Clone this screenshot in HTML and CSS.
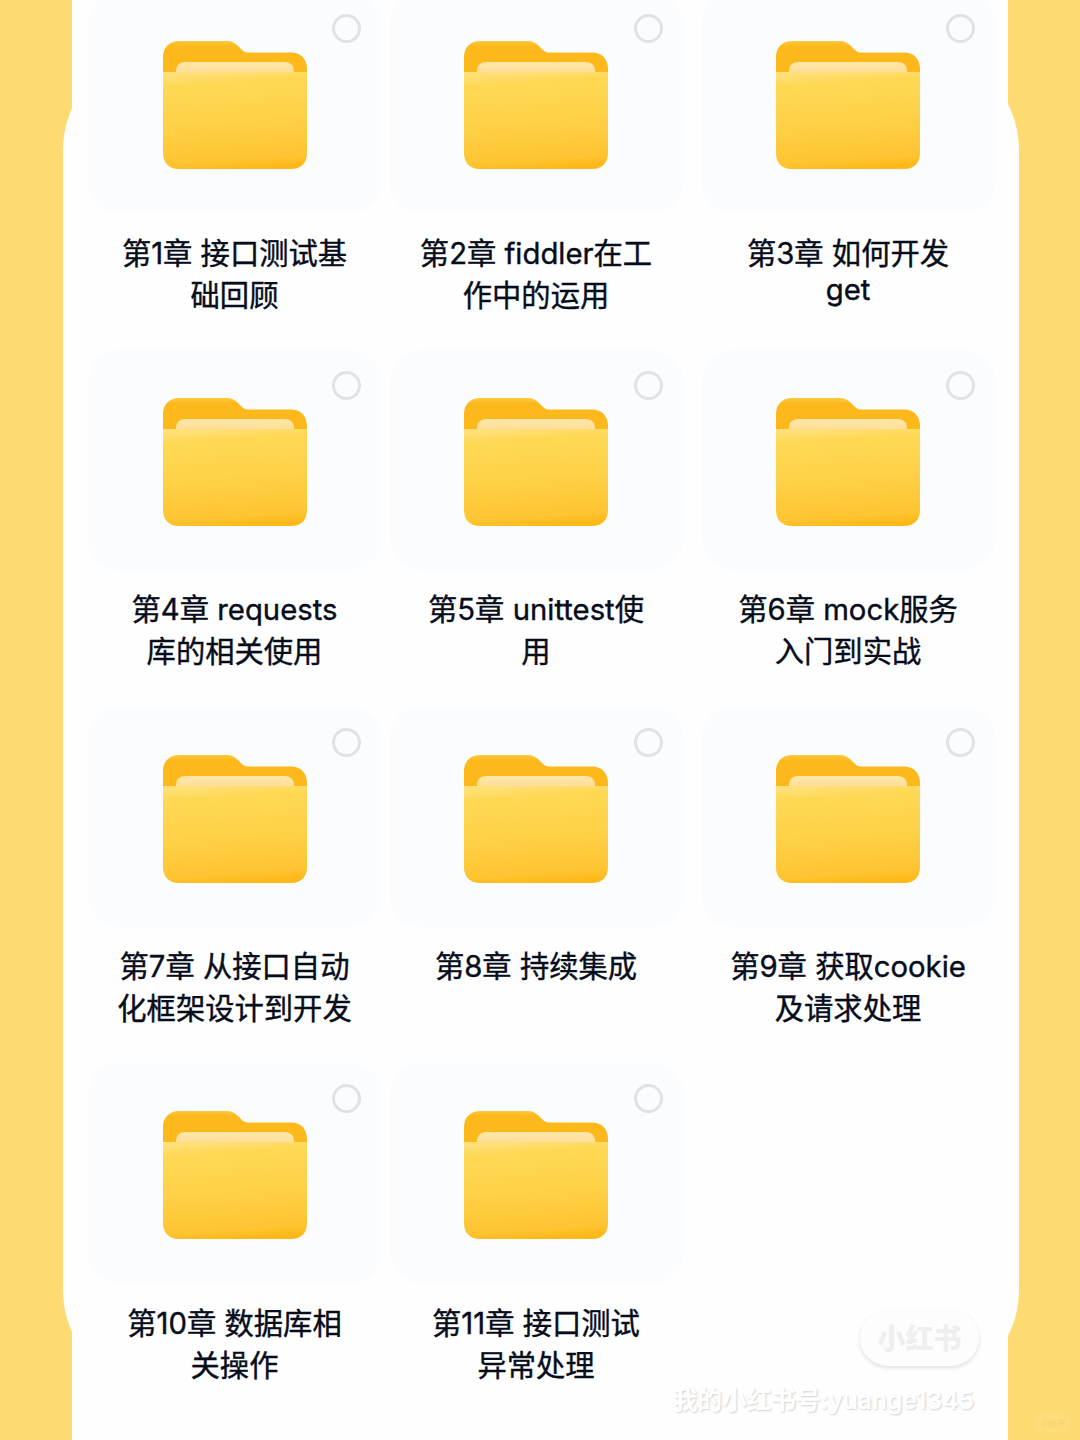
FILE: index.html
```
<!DOCTYPE html>
<html lang="zh-CN">
<head>
  <meta charset="UTF-8">
  <meta name="viewport" content="width=device-width, initial-scale=1.0">
  <title>接口测试课程目录</title>
  <link rel="stylesheet" href="styles.css">
</head>
<body>
  <svg class="defs" width="0" height="0" aria-hidden="true">
    <defs>
      <linearGradient id="back" x1="0" y1="0" x2="0" y2="1">
        <stop offset="0" stop-color="#ffc93f"/>
        <stop offset="0.15" stop-color="#fdb91b"/>
        <stop offset="1" stop-color="#fdb91b"/>
      </linearGradient>
      <linearGradient id="paper" x1="0" y1="0" x2="0" y2="1">
        <stop offset="0" stop-color="#ffe7a6"/>
        <stop offset="1" stop-color="#fedd9a"/>
      </linearGradient>
      <linearGradient id="front" x1="0.45" y1="0" x2="0.55" y2="1">
        <stop offset="0" stop-color="#ffdf78"/>
        <stop offset="0.1" stop-color="#fed955"/>
        <stop offset="0.5" stop-color="#fed148"/>
        <stop offset="0.9" stop-color="#fec431"/>
        <stop offset="1" stop-color="#feb817"/>
      </linearGradient>
      <symbol id="folder" viewBox="0 0 144 128">
        <path fill="url(#back)" d="M0 34V16C0 6 7 0 16 0H64C69 0 72 2 75 5L79 9C81 11 83 11.500 86 11.500H128C138 11.500 144 18 144 28V34Z"/>
        <path fill="url(#paper)" d="M13 32V30C13 24 17 21 23 21H121C127 21 131 24 131 30V32Z"/>
        <path fill="url(#front)" d="M0 31H144V112C144 122 138 128 128 128H16C6 128 0 122 0 112Z"/>
      </symbol>
    </defs>
  </svg>

  <div class="sheet">
    <div class="folders">
      <div class="folder">
        <div class="card"><span class="check"></span><svg class="icon"><use href="#folder"/></svg></div>
        <p>第1章 接口测试基<br>础回顾</p>
      </div>
      <div class="folder">
        <div class="card"><span class="check"></span><svg class="icon"><use href="#folder"/></svg></div>
        <p>第2章 fiddler在工<br>作中的运用</p>
      </div>
      <div class="folder">
        <div class="card"><span class="check"></span><svg class="icon"><use href="#folder"/></svg></div>
        <p>第3章 如何开发<br>get</p>
      </div>
      <div class="folder">
        <div class="card"><span class="check"></span><svg class="icon"><use href="#folder"/></svg></div>
        <p>第4章 requests<br>库的相关使用</p>
      </div>
      <div class="folder">
        <div class="card"><span class="check"></span><svg class="icon"><use href="#folder"/></svg></div>
        <p>第5章 unittest使<br>用</p>
      </div>
      <div class="folder">
        <div class="card"><span class="check"></span><svg class="icon"><use href="#folder"/></svg></div>
        <p>第6章 mock服务<br>入门到实战</p>
      </div>
      <div class="folder">
        <div class="card"><span class="check"></span><svg class="icon"><use href="#folder"/></svg></div>
        <p>第7章 从接口自动<br>化框架设计到开发</p>
      </div>
      <div class="folder">
        <div class="card"><span class="check"></span><svg class="icon"><use href="#folder"/></svg></div>
        <p>第8章 持续集成</p>
      </div>
      <div class="folder">
        <div class="card"><span class="check"></span><svg class="icon"><use href="#folder"/></svg></div>
        <p>第9章 获取cookie<br>及请求处理</p>
      </div>
      <div class="folder">
        <div class="card"><span class="check"></span><svg class="icon"><use href="#folder"/></svg></div>
        <p>第10章 数据库相<br>关操作</p>
      </div>
      <div class="folder">
        <div class="card"><span class="check"></span><svg class="icon"><use href="#folder"/></svg></div>
        <p>第11章 接口测试<br>异常处理</p>
      </div>
    </div>
  </div>

  <div class="watermark">
    <span class="brand">小红书</span>
    <span class="account">我的小红书号:yuange1345</span>
  </div>
  <span class="corner-mark">小红书</span>
</body>
</html>
```

FILE: styles.css
```
* {
  box-sizing: border-box;
}

body {
  position: relative;
  width: 1080px;
  height: 1440px;
  margin: 0;
  padding: 0 72px;
  overflow: hidden;
  background: #feda72;
  color: #080d1c;
  font-family: Inter, "Noto Sans CJK SC", sans-serif;
}

.defs {
  position: absolute;
}

.sheet {
  position: relative;
  height: 1440px;
  background: #fefefe;
}

/* rounded panel sticking out on both sides */
.sheet::before {
  content: "";
  position: absolute;
  top: 48px;
  bottom: 48px;
  left: -9px;
  right: -11px;
  border-radius: 102px;
  background: #fefefe;
}

.folders {
  position: relative;
  display: grid;
  grid-template-columns: 301.5px 312px 293px;
  grid-auto-rows: 356.8px;
  margin-left: 16px;
  transform: translateY(-7px);
}

.folder {
  width: 293px;
}

.card {
  position: relative;
  display: flex;
  justify-content: center;
  height: 220px;
  padding-top: 48px;
  border-radius: 30px;
  background: #fbfcfe;
}

.icon {
  width: 144px;
  height: 128px;
}

.check {
  position: absolute;
  top: 21px;
  right: 20px;
  width: 29px;
  height: 29px;
  border: 3px solid #e1e2e4;
  border-radius: 50%;
}

.folder p {
  margin: 16.5px 0 0;
  font-size: 29.3px;
  font-weight: 400;
  line-height: normal;
  text-align: center;
  white-space: nowrap;
  -webkit-text-stroke: 0.4px #080d1c;
}

.watermark {
  position: absolute;
  right: 106px;
  bottom: 22px;
  display: flex;
  flex-direction: column;
  align-items: flex-end;
  gap: 16px;
}

.brand {
  width: 119px;
  height: 56px;
  margin-right: -5px;
  border-radius: 28px;
  background: #fdfdfd;
  box-shadow: 0 2px 4px rgba(0, 0, 0, 0.12);
  color: #efefef;
  font-size: 28px;
  font-weight: 900;
  line-height: 58px;
  text-align: center;
}

.account {
  color: #fff;
  font-size: 24.6px;
  font-weight: 600;
  line-height: 36px;
  text-shadow: 1px 1px 2px rgba(0, 0, 0, 0.18);
  white-space: nowrap;
}

.corner-mark {
  position: absolute;
  right: 9px;
  bottom: 8px;
  width: 36px;
  height: 18px;
  border-radius: 9px;
  background: #fddc7b;
  color: #f9d56d;
  font-size: 8px;
  font-weight: 700;
  line-height: 18px;
  text-align: center;
}
```
